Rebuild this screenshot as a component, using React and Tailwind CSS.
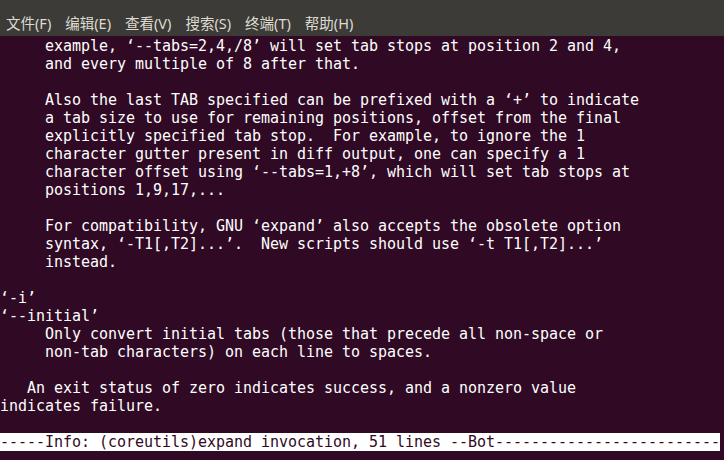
import React from 'react';

const menuItems = ['文件(F)', '编辑(E)', '查看(V)', '搜索(S)', '终端(T)', '帮助(H)'];

const lines = [
    '     example, ‘--tabs=2,4,/8’ will set tab stops at position 2 and 4,',
    '     and every multiple of 8 after that.',
    '',
    '     Also the last TAB specified can be prefixed with a ‘+’ to indicate',
    '     a tab size to use for remaining positions, offset from the final',
    '     explicitly specified tab stop.  For example, to ignore the 1',
    '     character gutter present in diff output, one can specify a 1',
    '     character offset using ‘--tabs=1,+8’, which will set tab stops at',
    '     positions 1,9,17,...',
    '',
    '     For compatibility, GNU ‘expand’ also accepts the obsolete option',
    '     syntax, ‘-T1[,T2]...’.  New scripts should use ‘-t T1[,T2]...’',
    '     instead.',
    '',
    '‘-i’',
    '‘--initial’',
    '     Only convert initial tabs (those that precede all non-space or',
    '     non-tab characters) on each line to spaces.',
    '',
    '   An exit status of zero indicates success, and a nonzero value',
    'indicates failure.',
    '',
];

const statusHead = '-----Info: (coreutils)expand invocation, 51 lines --Bot';
const status = statusHead + '-'.repeat(80 - statusHead.length);

const App = () => {
    return (
        <div className="w-[724px] h-[460px] overflow-hidden flex flex-col bg-[#300a24]">
            {/* menu bar */}
            <div className="h-9 shrink-0 bg-[#3c3b37] flex items-end pb-[3px] pl-[6px] gap-[14px] text-[14.5px] leading-[20px] text-[#dfdbd2] font-['Noto_Sans','Noto_Sans_CJK_SC',sans-serif]">
                {menuItems.map((item) => (
                    <span key={item}>{item}</span>
                ))}
            </div>

            {/* terminal */}
            <div className="flex-1 pt-[1px] font-['DejaVu_Sans_Mono',monospace] text-[15px] leading-[18px] tracking-[-0.03px] text-white">
                {lines.map((line, i) => (
                    <div key={i} className="h-[18px] whitespace-pre">{line}</div>
                ))}
                <div className="h-[18px] w-[720px] whitespace-pre bg-white text-[#300a24]">{status}</div>
            </div>
        </div>
    );
};

export default App;
